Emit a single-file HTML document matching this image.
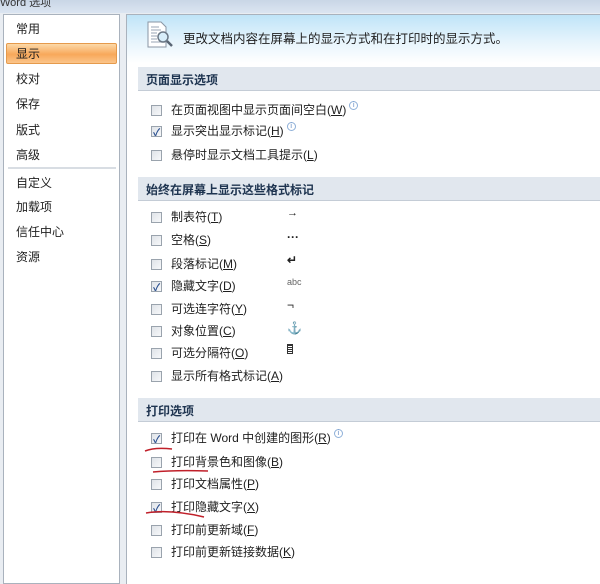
<!DOCTYPE html>
<html><head><meta charset="utf-8"><style>
*{margin:0;padding:0;box-sizing:border-box}
body{width:600px;height:577px;overflow:hidden;background:#e9edf2;font-family:"Liberation Sans","Noto Sans CJK SC",sans-serif;font-size:12px;color:#1e1e1e;position:relative}
.abs{position:absolute;white-space:nowrap}
#title{left:0;top:0;width:600px;height:13px;background:linear-gradient(#c9d6e6,#dbe5f1)}
#left{left:3px;top:14px;width:117px;height:570px;background:#fff;border:1px solid #a9b2bd}
#right{left:126px;top:14px;width:480px;height:570px;background:#fff;border-left:1px solid #a9b2bd;border-top:1px solid #a9b2bd}
#hdr{left:127px;top:15px;width:473px;height:48px;background:linear-gradient(to bottom,#bfe4f8 0%,#e6f4fc 55%,#fff 100%)}
.nav{left:16px;font-size:12px;transform:translateY(-1px)}
#sel{left:6px;top:43px;width:111px;height:21px;background:linear-gradient(#fcd9a8,#f8a85a 55%,#fbc58a);border:1px solid #e59a4c;border-radius:2px}
.sec{left:138px;width:462px;height:24px;background:#e1e7ee;border-bottom:1px solid #c4ccd6;font-weight:bold;color:#1e3450;padding:4px 0 0 8px;font-size:12px}
.cb{left:151px;width:11px;height:11px;border:1px solid #9aa3ad;background:linear-gradient(135deg,#dfe3e8,#f7f8fa)}
.cb.c::after{content:"✓";position:absolute;left:1px;top:-3px;font-size:10px;color:#2a4f8f;font-weight:bold}
.t{left:171px;transform:translateY(-2px)}
.sym{left:287px;color:#222}
.info{display:inline-block;width:9px;height:9px;border:1px solid #8fb0d8;border-radius:50%;font-size:7px;line-height:8px;text-align:center;color:#5a84c0;vertical-align:top;margin-left:3px}
u{text-decoration:underline}
</style></head><body>
<div class="abs" id="title"></div>
<div class="abs" style="left:0;top:-6px;font-size:11px;color:#333">Word 选项</div>
<div class="abs" id="left"></div>
<div class="abs" id="right"></div>
<div class="abs" id="hdr"></div>
<div class="abs" id="sel"></div>
<div class="abs nav" style="top:21px">常用</div>
<div class="abs nav" style="top:46px">显示</div>
<div class="abs nav" style="top:71px">校对</div>
<div class="abs nav" style="top:96px">保存</div>
<div class="abs nav" style="top:122px">版式</div>
<div class="abs nav" style="top:147px">高级</div>
<div class="abs" style="left:8px;top:167px;width:108px;height:2px;background:#d8dde3"></div>
<div class="abs nav" style="top:175px">自定义</div>
<div class="abs nav" style="top:199px">加载项</div>
<div class="abs nav" style="top:224px">信任中心</div>
<div class="abs nav" style="top:249px">资源</div>

<svg class="abs" style="left:146px;top:21px" width="30" height="30" viewBox="0 0 30 30">
<path d="M2 1h13l5 5v20H2z" fill="#fff" stroke="#8a96a4"/>
<path d="M5 6h8M5 9h10M5 12h6M5 15h6M5 18h6M5 21h10" stroke="#9aa6b4"/>
<circle cx="17" cy="16" r="5" fill="#d8eefa" stroke="#6b7886" stroke-width="1.5"/>
<path d="M21 20l5 5" stroke="#5a6674" stroke-width="2.5"/>
</svg>
<div class="abs" style="left:183px;top:28px;font-size:12.5px">更改文档内容在屏幕上的显示方式和在打印时的显示方式。</div>

<div class="abs sec" style="top:67px">页面显示选项</div>
<div class="abs cb" style="top:105px"></div><div class="abs t" style="top:103px">在页面视图中显示页面间空白(<u>W</u>)<span class="info">i</span></div>
<div class="abs cb c" style="top:126px"></div><div class="abs t" style="top:124px">显示突出显示标记(<u>H</u>)<span class="info">i</span></div>
<div class="abs cb" style="top:150px"></div><div class="abs t" style="top:148px">悬停时显示文档工具提示(<u>L</u>)</div>

<div class="abs sec" style="top:177px">始终在屏幕上显示这些格式标记</div>
<div class="abs cb" style="top:212px"></div><div class="abs t" style="top:210px">制表符(<u>T</u>)</div><div class="abs sym" style="top:207px;font-size:11px;font-weight:bold">→</div>
<div class="abs cb" style="top:235px"></div><div class="abs t" style="top:233px">空格(<u>S</u>)</div><div class="abs sym" style="top:230px;font-weight:bold">···</div>
<div class="abs cb" style="top:259px"></div><div class="abs t" style="top:257px">段落标记(<u>M</u>)</div><div class="abs sym" style="top:253px;font-size:12px;font-weight:bold">↵</div>
<div class="abs cb c" style="top:281px"></div><div class="abs t" style="top:279px">隐藏文字(<u>D</u>)</div><div class="abs sym" style="top:277px;font-size:9px;color:#666">abc</div>
<div class="abs cb" style="top:304px"></div><div class="abs t" style="top:302px">可选连字符(<u>Y</u>)</div><div class="abs sym" style="top:298px">¬</div>
<div class="abs cb" style="top:326px"></div><div class="abs t" style="top:324px">对象位置(<u>C</u>)</div><div class="abs sym" style="top:321px;font-weight:bold;color:#000">⚓</div>
<div class="abs cb" style="top:348px"></div><div class="abs t" style="top:346px">可选分隔符(<u>O</u>)</div><div class="abs sym" style="top:344px;width:6px;height:10px;border:1px solid #333;background:repeating-linear-gradient(#333 0 1px,#fff 1px 2px)"></div>
<div class="abs cb" style="top:371px"></div><div class="abs t" style="top:369px">显示所有格式标记(<u>A</u>)</div>

<div class="abs sec" style="top:398px">打印选项</div>
<div class="abs cb c" style="top:433px"></div><div class="abs t" style="top:431px">打印在 Word 中创建的图形(<u>R</u>)<span class="info">i</span></div>
<div class="abs cb" style="top:457px"></div><div class="abs t" style="top:455px">打印背景色和图像(<u>B</u>)</div>
<div class="abs cb" style="top:479px"></div><div class="abs t" style="top:477px">打印文档属性(<u>P</u>)</div>
<div class="abs cb c" style="top:502px"></div><div class="abs t" style="top:500px">打印隐藏文字(<u>X</u>)</div>
<div class="abs cb" style="top:525px"></div><div class="abs t" style="top:523px">打印前更新域(<u>F</u>)</div>
<div class="abs cb" style="top:547px"></div><div class="abs t" style="top:545px">打印前更新链接数据(<u>K</u>)</div>

<svg class="abs" style="left:140px;top:440px" width="80" height="85" viewBox="0 0 80 85">
<path d="M5 11 Q15 7 32 9" stroke="#c0202a" stroke-width="1.5" fill="none"/>
<path d="M13 32 Q35 30 68 31" stroke="#c0202a" stroke-width="1.5" fill="none"/>
<path d="M6 73 Q30 69 64 77" stroke="#c0202a" stroke-width="1.5" fill="none"/>
</svg>
</body></html>
